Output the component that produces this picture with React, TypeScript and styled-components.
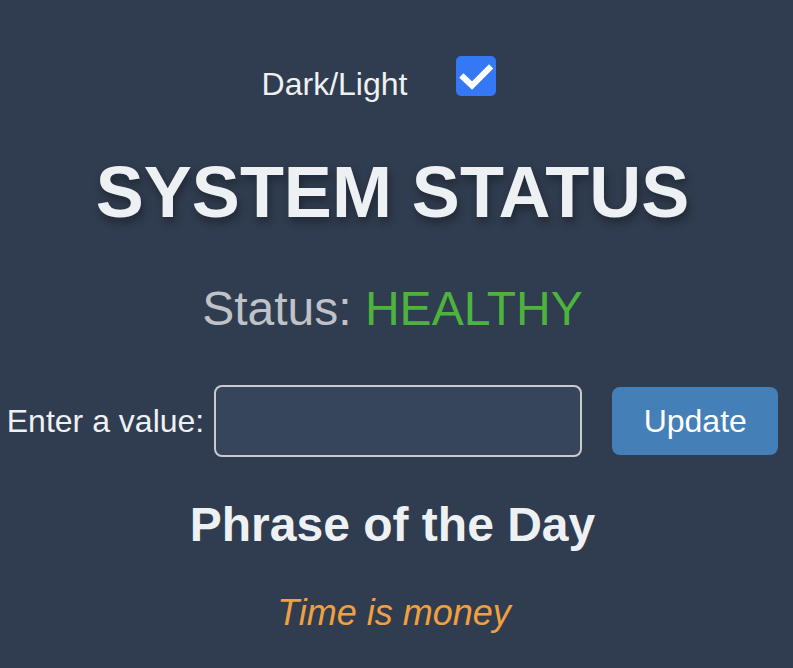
import React, { useState } from "react";
import styled, { createGlobalStyle } from "styled-components";

const GlobalStyle = createGlobalStyle`
  html, body {
    margin: 0;
    padding: 0;
    background: #303c4f;
  }
  body {
    font-family: "Liberation Sans", Arial, Helvetica, sans-serif;
    color: #eef1f3;
  }
`;

const Page = styled.main`
  box-sizing: border-box;
  width: 785px;
  min-height: 668px;
  padding-top: 56px;
  display: flex;
  flex-direction: column;
  align-items: center;
`;

const ToggleRow = styled.label`
  display: flex;
  align-items: flex-start;
  gap: 49px;
  margin-left: 3px;
  cursor: pointer;
`;

const ToggleText = styled.span`
  margin-top: 12px;
  font-size: 32px;
  line-height: 32px;
  color: #eef1f3;
`;

const HiddenInput = styled.input`
  position: absolute;
  opacity: 0;
  width: 0;
  height: 0;
  margin: 0;
`;

const CheckBox = styled.span<{ $checked: boolean }>`
  width: 40px;
  height: 40px;
  margin-right: 30px;
  border-radius: 5px;
  background: ${(p) => (p.$checked ? "#3478f6" : "#ffffff")};
  display: flex;
  align-items: center;
  justify-content: center;
`;

const Title = styled.h1`
  margin: 56px 0 0;
  font-size: 72px;
  line-height: 72px;
  font-weight: 700;
  color: #eef1f3;
  text-shadow: 2px 5px 9px rgba(0, 0, 0, 0.35);
`;

const StatusLine = styled.p`
  margin: 57px 0 0;
  font-size: 48px;
  line-height: 48px;
  color: #bfc3c8;
`;

const StatusValue = styled.span<{ $color: string }>`
  color: ${(p) => p.$color};
`;

const FormRow = styled.form`
  margin-top: 52px;
  display: flex;
  align-items: center;
`;

const FieldLabel = styled.label`
  font-size: 32px;
  line-height: 32px;
  color: #eef1f3;
  margin-right: 10px;
`;

const TextInput = styled.input`
  box-sizing: border-box;
  width: 368px;
  height: 72px;
  border: 2px solid #c9cbcd;
  border-radius: 8px;
  background: #364559;
  color: #eef1f3;
  font-family: inherit;
  font-size: 32px;
  padding: 0 14px;
  outline: none;
`;

const UpdateButton = styled.button`
  box-sizing: border-box;
  margin-left: 30px;
  width: 166px;
  height: 68px;
  border: none;
  border-radius: 8px;
  background: #447fb8;
  color: #ffffff;
  font-family: inherit;
  font-size: 32px;
  cursor: pointer;
`;

const Subtitle = styled.h2`
  margin: 44px 0 0;
  font-size: 48px;
  line-height: 48px;
  font-weight: 700;
  color: #eef1f3;
`;

const Phrase = styled.p`
  margin: 46px 0 0 3px;
  font-size: 36px;
  line-height: 36px;
  font-style: italic;
  color: #f0a040;
`;

export default function App() {
  const [dark, setDark] = useState(true);
  const [value, setValue] = useState("");

  return (
    <>
      <GlobalStyle />
      <Page>
        <ToggleRow>
          <ToggleText>Dark/Light</ToggleText>
          <HiddenInput
            type="checkbox"
            checked={dark}
            onChange={(e) => setDark(e.target.checked)}
          />
          <CheckBox $checked={dark}>
            {dark && (
              <svg width="40" height="40" viewBox="0 0 40 40">
                <path
                  d="M7.5 21.5 L16 29.5 L33 12.5"
                  fill="none"
                  stroke="#ffffff"
                  strokeWidth="6"
                  strokeLinecap="square"
                />
              </svg>
            )}
          </CheckBox>
        </ToggleRow>
        <Title>SYSTEM STATUS</Title>
        <StatusLine>
          Status: <StatusValue $color="#4db33d">HEALTHY</StatusValue>
        </StatusLine>
        <FormRow onSubmit={(e) => e.preventDefault()}>
          <FieldLabel htmlFor="value">Enter a value:</FieldLabel>
          <TextInput
            id="value"
            value={value}
            onChange={(e) => setValue(e.target.value)}
          />
          <UpdateButton type="submit">Update</UpdateButton>
        </FormRow>
        <Subtitle>Phrase of the Day</Subtitle>
        <Phrase>Time is money</Phrase>
      </Page>
    </>
  );
}
